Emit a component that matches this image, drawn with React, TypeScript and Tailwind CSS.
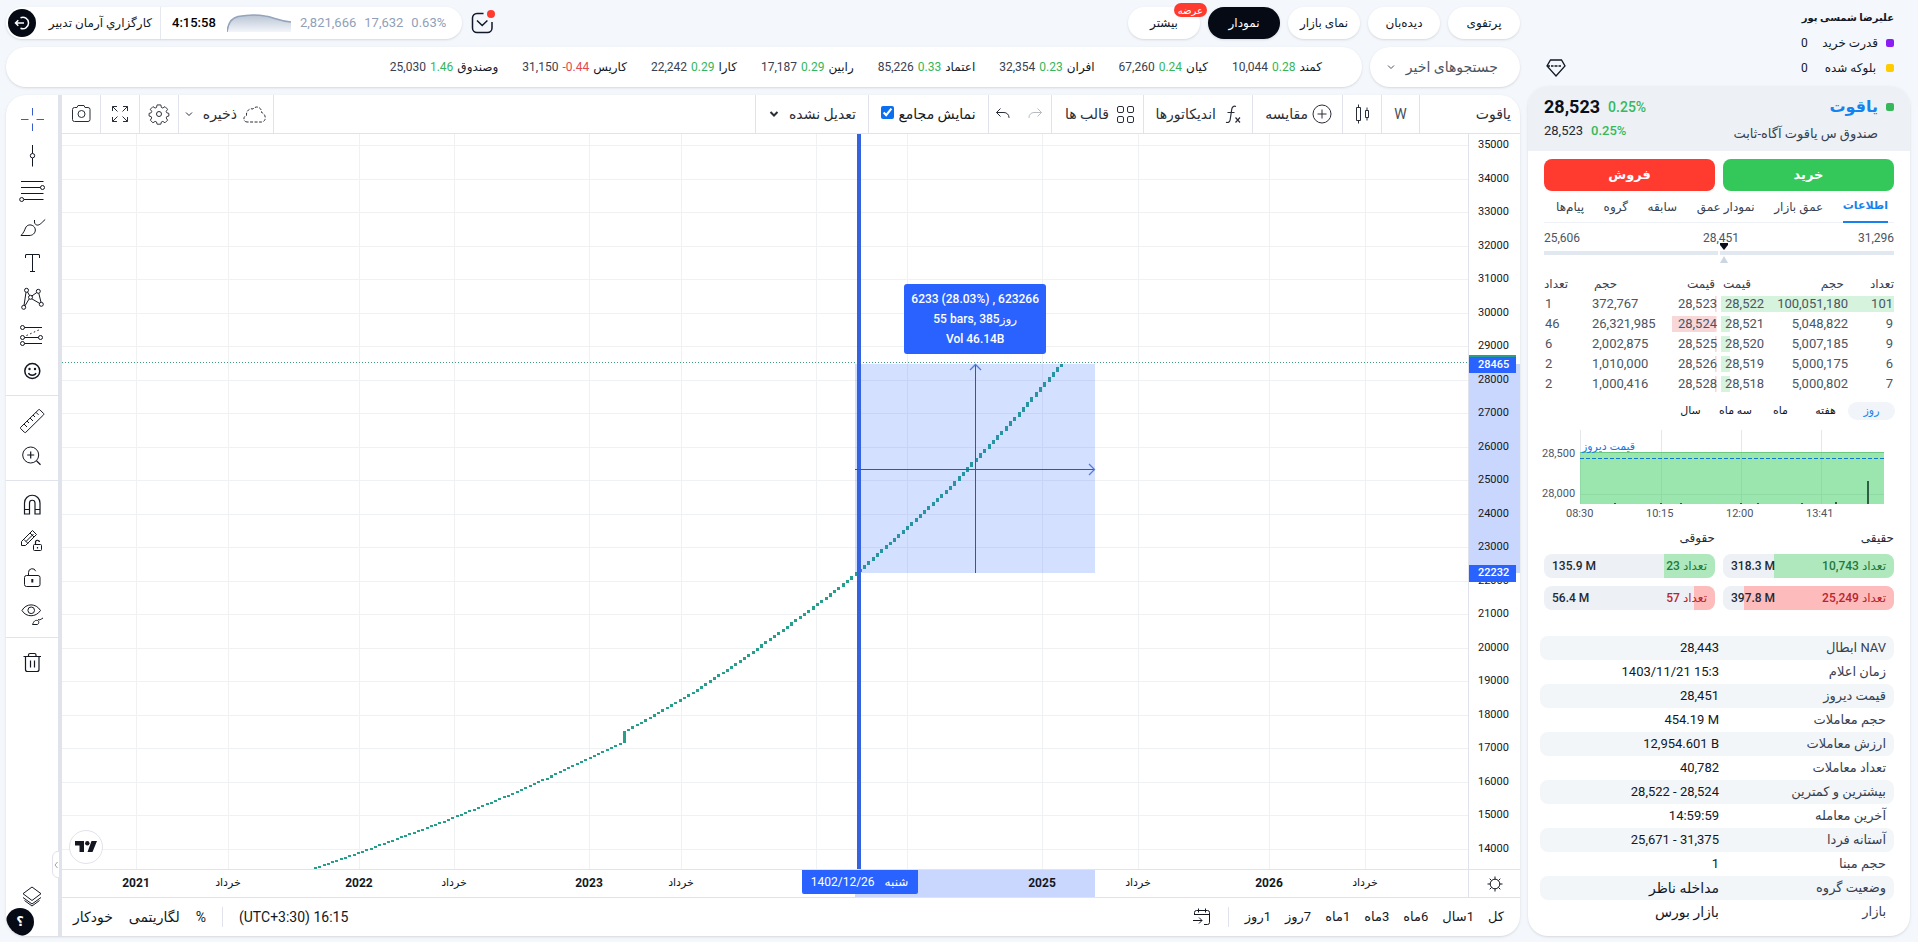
import type { ReactNode } from "react";

type IconProps = { children: ReactNode; size?: number; className?: string };

function Icon({ children, size = 28, className = "" }: IconProps) {
  return (
    <svg
      width={size}
      height={size}
      viewBox={`0 0 ${size} ${size}`}
      fill="none"
      stroke="currentColor"
      className={`shrink-0 ${className}`}
      aria-hidden="true"
    >
      {children}
    </svg>
  );
}

/* ---------- chart data ---------- */

const PLOT_W = 1406;
const PLOT_H = 735;

const CURVE: [number, number][] = [
  [253, 734],
  [310, 714],
  [388, 685],
  [445, 662],
  [488, 643],
  [527, 624],
  [561, 608],
  [562, 598],
  [588, 584],
  [632, 558],
  [680, 526],
  [728, 491],
  [777, 454],
  [794, 440],
  [845, 394],
  [885, 357],
  [911, 329],
  [959, 278],
  [1000, 230],
];

function curveY(x: number) {
  for (let i = 1; i < CURVE.length; i++) {
    const [x0, y0] = CURVE[i - 1];
    const [x1, y1] = CURVE[i];
    if (x <= x1) return y0 + ((y1 - y0) * (x - x0)) / (x1 - x0);
  }
  return CURVE[CURVE.length - 1][1];
}

const STEP = 4.29;
const BARS = Array.from({ length: 176 }, (_, i) => {
  const x = 253 + i * STEP;
  const top = Math.round(curveY(x + STEP / 2));
  const bottom = Math.round(curveY(x - STEP / 2));
  return { x: Math.round(x) - 1, y: top, h: Math.max(2, bottom - top) };
}).filter((b) => b.x <= 1000);

const PRICES = Array.from({ length: 22 }, (_, i) => 35000 - i * 1000);

const TIMES = [
  { x: 74, label: "2021", bold: true },
  { x: 166, label: "خرداد" },
  { x: 297, label: "2022", bold: true },
  { x: 392, label: "خرداد" },
  { x: 527, label: "2023", bold: true },
  { x: 619, label: "خرداد" },
  { x: 754, label: "" },
  { x: 845, label: "" },
  { x: 980, label: "2025", bold: true },
  { x: 1076, label: "خرداد" },
  { x: 1207, label: "2026", bold: true },
  { x: 1303, label: "خرداد" },
];

/* ---------- top bar ---------- */

function TopBar() {
  return (
    <header className="flex h-8 items-center justify-between">
      <div className="flex items-center gap-2">
        <div className="flex h-8 items-center rounded-full bg-white pr-4 shadow-sm">
          <button
            aria-label="خروج"
            className="ml-[2px] flex size-7 items-center justify-center rounded-full bg-[#050a14] text-white"
          >
            <Icon size={16}>
              <path d="M6.500 2.800A5.700 5.700 0 1 1 6.500 13.200M10 8H1.500M4.300 5.200 1.500 8l2.800 2.800" strokeWidth="1.500" />
            </Icon>
          </button>
          <span className="w-[124px] pr-2 text-right text-[12px] whitespace-nowrap text-[#111827]">
            كارگزاري آرمان تدبير
          </span>
          <span className="h-8 w-px bg-[#e5e9ef]" />
          <span className="w-[66px] pl-[11px] text-[13px] font-medium text-black">4:15:58</span>
          <svg width="65" height="18" viewBox="0 0 65 18" aria-hidden="true">
            <defs>
              <linearGradient id="spark" x1="0" y1="0" x2="0" y2="1">
                <stop offset="0" stopColor="#b9c4d4" />
                <stop offset="1" stopColor="#f3f6fa" />
              </linearGradient>
            </defs>
            <path d="M0 18C1 9 4 4 11 2.500C19 1 30 0.500 38 2C46 3 52 7 64 8V18Z" fill="url(#spark)" />
            <path d="M0 18C1 9 4 4 11 2.500C19 1 30 0.500 38 2C46 3 52 7 64 8" fill="none" stroke="#93a4bb" strokeWidth="1.500" />
          </svg>
          <div className="ml-2 flex gap-2 text-[13px] text-[#8fa0b8]">
            <span>2,821,666</span>
            <span>17,632</span>
            <span>0.63%</span>
          </div>
        </div>
        <button aria-label="پیام‌ها" className="relative text-[#111827]">
          <Icon size={24}>
            <path d="M13.500 2.500H7A4.500 4.500 0 0 0 2.500 7v10A4.500 4.500 0 0 0 7 21.500h10.500A4.500 4.500 0 0 0 22 17v-6" strokeWidth="1.500" />
            <path d="m7 9.500 5.200 5 5.200-5" strokeWidth="1.500" />
          </Icon>
          <span className="absolute -right-px -top-px size-2 rounded-full bg-[#ff3b30]" />
        </button>
      </div>
      <nav className="flex gap-2 text-[12px] text-[#111827]">
        <button className="relative h-8 w-[72px] rounded-full bg-white shadow-sm">
          بیشتر
          <span className="absolute -right-[7px] -top-1 flex h-[14px] items-center rounded-full bg-[#ff3b30] px-1 text-[10px] text-white">
            عرضه
          </span>
        </button>
        <button className="h-8 w-[72px] rounded-full bg-[#050a14] text-white shadow-sm">نمودار</button>
        <button className="h-8 w-[72px] rounded-full bg-white shadow-sm">نمای بازار</button>
        <button className="h-8 w-[72px] rounded-full bg-white shadow-sm">دیده‌بان</button>
        <button className="h-8 w-[72px] rounded-full bg-white shadow-sm">پرتفوی</button>
      </nav>
    </header>
  );
}

const TICKERS = [
  { name: "وصندوق", pct: "1.46", price: "25,030" },
  { name: "کاریس", pct: "-0.44", price: "31,150" },
  { name: "کارا", pct: "0.29", price: "22,242" },
  { name: "رابین", pct: "0.29", price: "17,187" },
  { name: "اعتماد", pct: "0.33", price: "85,226" },
  { name: "افران", pct: "0.23", price: "32,354" },
  { name: "کیان", pct: "0.24", price: "67,260" },
  { name: "کمند", pct: "0.28", price: "10,044" },
];

function TickerRow() {
  return (
    <div className="flex h-10 gap-2">
      <ul className="flex flex-1 items-center justify-end gap-6 rounded-[20px] bg-white pr-10 text-[12px] text-[#374151] shadow-sm">
        {TICKERS.map((t) => (
          <li key={t.name} className="flex items-center gap-1">
            <span>{t.price}</span>
            <span className={t.pct.startsWith("-") ? "text-[#e5484d]" : "text-[#34b65a]"}>{t.pct}</span>
            <span className="text-[#111827]">{t.name}</span>
          </li>
        ))}
      </ul>
      <button className="flex w-[150px] items-center justify-between rounded-[20px] bg-white pl-4 pr-[22px] text-[14px] text-[#4b5563] shadow-sm">
        <Icon size={10}>
          <path d="m2 3.500 3 3 3-3" />
        </Icon>
        جستجوهای اخیر
      </button>
    </div>
  );
}

/* ---------- chart toolbar ---------- */

function ChartToolbar() {
  return (
    <div className="flex h-[39px] shrink-0 items-stretch border-b border-[#e0e3eb] text-[14px] text-[#2a2e39]">
      <button aria-label="عکس" className="flex w-[38px] items-center justify-center">
        <Icon>
          <path d="M5.500 9.500a2 2 0 0 1 2-2H10l1-2h6l1 2h3a2 2 0 0 1 2 2v10a2 2 0 0 1-2 2h-13.500a2 2 0 0 1-2-2z" />
          <circle cx="14.500" cy="14" r="3.500" />
        </Icon>
      </button>
      <button aria-label="تمام صفحه" className="flex w-[39px] items-center justify-center border-l border-[#e0e3eb]">
        <Icon>
          <path d="M6.500 11V6.500H11M6.500 6.500l5 5M17 6.500h4.500V11M21.500 6.500l-5 5M6.500 17v4.500H11M6.500 21.500l5-5M17 21.500h4.500V17M21.500 21.500l-5-5" />
        </Icon>
      </button>
      <button aria-label="تنظیمات" className="flex w-[39px] items-center justify-center border-l border-[#e0e3eb]">
        <Icon>
          <circle cx="14" cy="14" r="2.500" />
          <path
            d="M12 4.500h4l.6 2.700 1.500.6 2.300-1.500 2.800 2.800-1.500 2.300.6 1.500 2.200.6v2.800l-2.200.6-.6 1.500 1.500 2.300-2.800 2.800-2.300-1.500-1.500.6-.6 2.400h-4l-.6-2.400-1.500-.6-2.300 1.500-2.800-2.800 1.500-2.300-.6-1.500-2.200-.6v-2.800l2.200-.6.6-1.500-1.500-2.300 2.800-2.800 2.300 1.500 1.500-.6z"
            transform="translate(.8 .7) scale(.94)"
          />
        </Icon>
      </button>
      <button className="flex w-[96px] items-center justify-between border-x border-[#e0e3eb] pl-1 pr-[6px]">
        <Icon size={12}>
          <path d="m3 4.500 3 3 3-3" />
        </Icon>
        <span className="ml-auto mr-1">ذخیره</span>
        <Icon size={26}>
          <path
            d="M6 21c-3.500 0-4.500-5.500-.5-6.500C5 9.500 9 7 12 8c3-4 9-1.500 8.500 3.500 2 .5 4.500 3 3.500 7-.5 1.500-2 2.500-3.500 2.500z"
            strokeDasharray="3 1.500"
          />
        </Icon>
      </button>
      <div className="flex-1" />
      <div className="flex w-[113px] items-center border-l border-[#e0e3eb] pl-3 pr-2">
        <Icon size={12}>
          <path d="m2.500 4 3.500 3.500L9.500 4" strokeWidth="2" />
        </Icon>
        <select
          aria-label="تعدیل قیمت"
          dir="rtl"
          className="min-w-0 flex-1 appearance-none bg-transparent pr-1 outline-none"
          defaultValue="raw"
        >
          <option value="raw">تعدیل نشده</option>
          <option value="adj">تعدیل شده</option>
        </select>
      </div>
      <label className="flex w-[120px] items-center justify-center gap-1 border-l border-[#e0e3eb] text-[#131722]">
        <input type="checkbox" defaultChecked className="mb-1 size-[13px] accent-[#0b6ff2]" />
        <span className="whitespace-nowrap">نمایش مجامع</span>
      </label>
      <div className="flex w-[63px] items-center border-l border-[#e0e3eb]">
        <button aria-label="واگرد">
          <Icon>
            <path d="M11.500 8.500 7.500 12.500l4 4M7.500 12.500h7.500a5 5 0 0 1 5 5v.5" />
          </Icon>
        </button>
        <button aria-label="ازنو" className="ml-1 text-[#b8bbc4]">
          <Icon>
            <path d="m16.500 8.500 4 4-4 4M20.500 12.500H13a5 5 0 0 0-5 5v.5" />
          </Icon>
        </button>
      </div>
      <button className="flex w-[92px] items-center justify-end border-l border-[#e0e3eb] pr-1">
        <span className="mr-[2px]">قالب ها</span>
        <Icon>
          <rect x="6.500" y="6.500" width="6" height="6" rx="1.500" />
          <rect x="16.500" y="6.500" width="6" height="6" rx="1.500" />
          <rect x="6.500" y="16.500" width="6" height="6" rx="1.500" />
          <rect x="16.500" y="16.500" width="6" height="6" rx="1.500" />
        </Icon>
      </button>
      <button className="flex w-[109px] items-center justify-end border-l border-[#e0e3eb] pr-[6px]">
        <span className="mr-[2px]">اندیکاتورها</span>
        <Icon>
          <path d="M18 6.500c-2.500-1-4 .5-4.300 3l-1.500 10c-.3 2-1.500 3.500-4.200 2.800M9.500 12.500h7M17.500 17.500l4.500 5M22 17.500l-4.500 5" strokeWidth="1.200" />
        </Icon>
      </button>
      <button className="flex w-[90px] items-center justify-end border-l border-[#e0e3eb] pr-[6px]">
        <span>مقایسه</span>
        <Icon>
          <circle cx="14" cy="14" r="9" />
          <path d="M14 9.500v9M9.500 14h9" />
        </Icon>
      </button>
      <button aria-label="نوع نمودار" className="flex w-[39px] items-center justify-center border-l border-[#e0e3eb]">
        <Icon>
          <path d="M8.500 7.500h4v13h-4zM10.500 4.500v3M10.500 20.500v3M17.500 10.500h3v7h-3zM19 7.500v3M19 17.500v3" />
        </Icon>
      </button>
      <button className="flex w-[38px] items-center justify-center border-l border-[#e0e3eb] text-[#4a4e59]">W</button>
      <button className="w-[101px] border-l border-[#e0e3eb] pr-[9px] text-right">یاقوت</button>
    </div>
  );
}

/* ---------- drawing tools ---------- */

const TOOL_GROUPS: { name: string; icon: ReactNode }[][] = [
  [
    {
      name: "نشانگر",
      icon: <path d="M3 14.500h7.500M18.500 14.500H26M14.500 3v7.500M14.500 18.500V26" stroke="#3a5bcc" />,
    },
    {
      name: "خط",
      icon: (
        <>
          <path d="M14.500 4v8.500M14.500 17v8.500" />
          <circle cx="14.500" cy="14.700" r="2.200" />
        </>
      ),
    },
    {
      name: "فیبوناچی",
      icon: (
        <>
          <path d="M3 4.500h22.500M3 10.500h19.500M3 16.500h22.500M6 22.500h19.500" strokeWidth="1.200" />
          <circle cx="24.500" cy="10.500" r="2" />
          <circle cx="3.700" cy="22.500" r="2" />
        </>
      ),
    },
    {
      name: "قلم",
      icon: (
        <>
          <path d="M3 22.500c2.500-2.500 3.500-5 4.500-7.500 1.300-3.200 5-4 7.800-2 2.700 2 2.600 6 .2 8-1.200 1-2.600 1.500-4.500 1.500z" />
          <path d="M16.500 7c-.3 3 .5 4.500 2.200 5 3 .7 5-2.500 8.500-5.500" />
        </>
      ),
    },
    {
      name: "متن",
      icon: (
        <path
          fill="currentColor"
          stroke="none"
          d="M8 6.500c0-.28.22-.5.500-.5H14v16h-2v1h5v-1h-2V6h5.500c.28 0 .5.22.5.5V9h1V6.500c0-.83-.67-1.500-1.500-1.500h-12C7.670 5 7 5.670 7 6.500V9h1V6.500Z"
        />
      ),
    },
    {
      name: "الگو",
      icon: (
        <>
          <path d="M8 7.300 6 20.500M9.500 7l2.200 3.800M7 20.800l4-6.700M13.800 11l5-3.500M13.800 13.800l8 4.700M20.800 8.300l2.200 9" />
          <circle cx="8.500" cy="5.300" r="2" />
          <circle cx="20.300" cy="6.300" r="2" />
          <circle cx="12.500" cy="12.300" r="2" />
          <circle cx="5.700" cy="22.300" r="2" />
          <circle cx="23.300" cy="19.300" r="2" />
        </>
      ),
    },
    {
      name: "پیش‌بینی",
      icon: (
        <>
          <path d="M6.500 6.500H24M6.500 16.500h14M6.500 22.500H24" />
          <path d="M8.500 14.500 23 8" strokeDasharray="1.500 2.500" />
          <circle cx="4.500" cy="6.500" r="2" />
          <circle cx="4.500" cy="16.500" r="2" />
          <circle cx="22.500" cy="16.500" r="2" />
          <circle cx="4.500" cy="22.500" r="2" />
        </>
      ),
    },
    {
      name: "شکلک",
      icon: (
        <>
          <circle cx="14.300" cy="14" r="7.500" strokeWidth="1.500" />
          <circle cx="11.500" cy="12" r="1.200" fill="currentColor" stroke="none" />
          <circle cx="17" cy="12" r="1.200" fill="currentColor" stroke="none" />
          <path d="M10.500 16c1 3 6.500 3 7.500 0" strokeWidth="1.300" />
        </>
      ),
    },
  ],
  [
    {
      name: "خط‌کش",
      icon: (
        <path d="M2.500 21.500 20.500 3.800c.5-.4 1-.4 1.400 0l3.700 3.700c.4.400.4.900 0 1.300L7.800 26.300c-.4.400-1 .4-1.400 0l-3.800-3.800c-.3-.3-.4-.7-.1-1zM6 18l3 3M9 15l2 2M12 12l3 3M15 9l2 2M18 6.300l2.500 2.500" />
      ),
    },
    {
      name: "بزرگ‌نمایی",
      icon: (
        <>
          <circle cx="12.700" cy="13" r="8" />
          <path d="M12.700 9.500v7M9.200 13h7M18.500 18.800l4 3.900" strokeWidth="1.200" />
        </>
      ),
    },
  ],
  [
    {
      name: "آهنربا",
      icon: (
        <path
          d="M6.500 23V12a7.750 7.750 0 0 1 15.500 0v11h-5V12a2.750 2.750 0 0 0-5.500 0v11zM6.500 18.500h5M17 18.500h5"
          strokeWidth="1.200"
        />
      ),
    },
    {
      name: "قفل قلم",
      icon: (
        <>
          <path d="m3.500 14.500 11-11 4 4-11 11H3.500zM6 12.500l4 4M12 6l4 4M5.500 12.500 13 5M8 14.500 15.500 7" />
          <rect x="15.500" y="17.500" width="8" height="6" rx="1" />
          <path d="M17.500 17.500v-2a2 2 0 0 1 4-.5M19.500 20v1.500" strokeWidth="1.200" />
        </>
      ),
    },
    {
      name: "قفل",
      icon: (
        <>
          <rect x="6.500" y="12.500" width="15.500" height="11" rx="2" />
          <path d="M10.500 12.500v-3a3.700 3.700 0 0 1 7.200-1.300" />
          <path d="M14.300 16v3.500" strokeWidth="2" />
        </>
      ),
    },
    {
      name: "نمایش",
      icon: (
        <>
          <path d="M4 11.500c4-7.500 14-7.500 18.500 0-4.500 7-14.500 7-18.500 0z" />
          <circle cx="13.200" cy="11.300" r="3.300" />
          <path d="M14.500 25.500c1.500-3.500 2.500-4.500 5-4 2 .6 1.500 4-.5 4zM20 20.500c1.500 1 2.500 0 5-1.500" />
        </>
      ),
    },
  ],
  [
    {
      name: "حذف",
      icon: (
        <path
          d="M5.500 8.500h17.500M10.500 8.500V7c0-1 .5-1.500 1.500-1.500h4.500c1 0 1.500.5 1.500 1.500v1.500M7.500 8.500v13c0 1.300.7 2 2 2h9.500c1.300 0 2-.7 2-2v-13M12.500 12.500v7M16.500 12.500v7"
          strokeWidth="1.200"
        />
      ),
    },
  ],
];

function DrawingTools() {
  return (
    <div className="relative flex w-14 shrink-0 flex-col border-r-4 border-[#e0e3eb] pb-[21px] pt-[6px] text-[#131722]">
      {TOOL_GROUPS.map((group, i) => (
        <div key={i} className={i > 0 ? "mt-[6px] border-t border-[#e0e3eb] pt-[6px]" : ""}>
          {group.map((tool) => (
            <button key={tool.name} aria-label={tool.name} className="flex h-9 w-full items-center justify-center">
              <Icon>{tool.icon}</Icon>
            </button>
          ))}
        </div>
      ))}
      <button aria-label="لایه‌ها" className="mt-auto flex h-9 w-full items-center justify-center">
        <Icon>
          <path d="m14 4 9 6.700-9 6.800-9-6.800zM5 14.500l9 6.500 9-6.500M6.500 17.500 14 23l7.500-5.500" />
        </Icon>
      </button>
      <button
        aria-label="جمع کردن"
        className="absolute -right-[2px] bottom-[58px] flex h-[27px] w-2 items-center justify-center rounded-l-md border border-[#e0e3eb] bg-white text-[#9aa0ad]"
      >
        <Icon size={6}>
          <path d="M4.500 0 2 3l2.500 3" />
        </Icon>
      </button>
      <button
        aria-label="راهنما"
        className="absolute bottom-0 left-0 flex size-7 items-center justify-center rounded-full bg-[#050a14] text-[13px] font-bold text-white"
      >
        ؟
      </button>
    </div>
  );
}

/* ---------- plot ---------- */

function Plot() {
  return (
    <div className="relative min-w-0 flex-1">
      <svg
        className="absolute inset-0 size-full"
        viewBox={`0 0 ${PLOT_W} ${PLOT_H}`}
        preserveAspectRatio="none"
        shapeRendering="crispEdges"
        aria-hidden="true"
      >
        {PRICES.map((p, i) => (
          <line key={p} x1="0" x2={PLOT_W} y1={11.5 + i * 33.52} y2={11.5 + i * 33.52} stroke="#f0f1f3" />
        ))}
        {TIMES.map((t) => (
          <line key={t.x} x1={t.x + 0.5} x2={t.x + 0.5} y1="0" y2={PLOT_H} stroke="#f0f1f3" />
        ))}
        {BARS.map((b) => (
          <rect key={b.x} x={b.x} y={b.y} width="3" height={b.h} fill="#26a08d" />
        ))}
        <line x1="0" x2={PLOT_W} y1="228.500" y2="228.500" stroke="#3d9a80" strokeDasharray="1 2" />
        <rect x="793" y="230" width="240" height="209" fill="#2962ff" fillOpacity="0.200" />
        <rect x="795" y="0" width="4" height={PLOT_H} fill="#3563e0" />
        <g stroke="#2f55b8" fill="none">
          <path d="M793 335.500h239M913.500 439V231" />
          <path d="m908 236 5.500-5.500L919 236M1027 330l5.500 5.500L1027 341" stroke="#5479e0" shapeRendering="auto" strokeWidth="1.300" />
        </g>
      </svg>
      <div className="absolute left-[59.900%] top-[20.400%] flex h-[70px] w-[142px] flex-col items-center justify-center rounded-[3px] bg-[#2962ff] text-[12px] leading-5 font-medium text-white">
        <span>6233 (28.03%) , 623266</span>
        <span>55 bars, 385روز</span>
        <span>Vol 46.14B</span>
      </div>
      <div className="absolute bottom-[5px] left-[7px] flex size-[34px] items-center justify-center rounded-full border border-[#e0e3eb] bg-white">
        <svg width="22" height="12" viewBox="0 0 22 12" fill="#131722" aria-hidden="true">
          <path d="M0 0h9v11H4.500V4.500H0zM16.500 0H22l-4.500 11h-5z" />
          <circle cx="12.300" cy="2.300" r="2.200" />
        </svg>
      </div>
    </div>
  );
}

function PriceAxis() {
  return (
    <div className="relative flex w-[52px] shrink-0 flex-col justify-between border-l border-[#e0e3eb] pb-3 pt-[3px] text-[11px] leading-4 text-[#131722]">
      <div className="absolute inset-x-0 top-[31.300%] h-[28.400%] bg-[#c9d7ff]" />
      {PRICES.map((p) => (
        <span key={p} className="relative pl-[9px]">
          {p}
        </span>
      ))}
      <span className="absolute left-0 top-[30.100%] flex h-[18px] w-[47px] items-center border-t-2 border-[#26a08d] bg-[#2962ff] pl-[9px] font-medium text-white">
        28465
      </span>
      <span className="absolute left-0 top-[58.600%] flex h-[17px] w-[47px] items-center bg-[#2962ff] pl-[9px] font-medium text-white">
        22232
      </span>
    </div>
  );
}

function TimeAxis() {
  return (
    <div className="flex h-7 shrink-0 border-t border-[#e0e3eb] text-[12px] text-[#131722]">
      <div className="relative flex-1">
        <div className="absolute inset-y-0 left-[56.400%] w-[17.100%] bg-[#c9d7ff]" />
        {TIMES.filter((t) => t.label).map((t) => (
          <span
            key={t.x}
            className={`absolute top-1 -translate-x-1/2 leading-[18px] ${t.bold ? "font-bold" : "text-[11px]"}`}
            style={{ left: `${(t.x / PLOT_W) * 100}%` }}
          >
            {t.label}
          </span>
        ))}
        <span className="absolute left-[52.600%] top-0 flex h-6 w-[116px] items-center justify-center gap-[10px] rounded-b-[2px] bg-[#2962ff] text-[12px] text-white">
          <span>1402/12/26</span>
          <span>شنبه</span>
        </span>
      </div>
      <button
        aria-label="تنظیمات محور"
        className="flex w-[52px] items-center justify-center border-l border-[#e0e3eb]"
      >
        <Icon size={20}>
          <circle cx="10" cy="10" r="4.800" />
          <path d="M10 2.500v2.700M10 14.800v2.700M2.500 10h2.700M14.800 10h2.700M4.700 4.700l1.900 1.900M13.400 13.400l1.900 1.900M4.700 15.300l1.900-1.900M13.400 6.600l1.900-1.900" />
        </Icon>
      </button>
    </div>
  );
}

const RANGES = ["کل", "1سال", "6ماه", "3ماه", "1ماه", "7روز", "1روز"];

function BottomBar() {
  return (
    <div className="flex h-[39px] shrink-0 items-center border-t border-[#e0e3eb] text-[14px] text-[#131722]">
      <button className="pl-[11px]">خودکار</button>
      <button className="pl-4">لگاریتمی</button>
      <button className="pl-4">%</button>
      <span className="ml-4 h-5 w-px bg-[#e0e3eb]" />
      <button className="pl-4">(UTC+3:30) 16:15</button>
      <div className="ml-auto flex items-center">
        <button aria-label="برو به تاریخ" className="mr-4">
          <Icon size={20}>
            <path d="M2.500 8V5.500a2 2 0 0 1 2-2h11a2 2 0 0 1 2 2v10a2 2 0 0 1-2 2H12M2.500 7.500h15M6.500 1.500v4M13.500 1.500v4M1 13.500h9M7 10.500l3 3-3 3" />
          </Icon>
        </button>
        <span className="h-5 w-px bg-[#e0e3eb]" />
        <div dir="rtl" className="flex gap-[14px] pl-4 pr-4 text-[13px]">
          {RANGES.map((r) => (
            <button key={r}>{r}</button>
          ))}
        </div>
      </div>
    </div>
  );
}

/* ---------- symbol panel ---------- */

const ASKS = [
  ["1", "372,767", "28,523", 1],
  ["46", "26,321,985", "28,524", 26],
  ["6", "2,002,875", "28,525", 1],
  ["2", "1,010,000", "28,526", 1],
  ["2", "1,000,416", "28,528", 1],
] as const;

const BIDS = [
  ["28,522", "100,051,180", "101", 100],
  ["28,521", "5,048,822", "9", 5],
  ["28,520", "5,007,185", "9", 5],
  ["28,519", "5,000,175", "6", 5],
  ["28,518", "5,000,802", "7", 5],
] as const;

function MarketDepth() {
  return (
    <div className="mt-[9px] flex gap-1 px-4 text-[13px] text-[#4b5563]">
      <table className="w-[173px] border-separate border-spacing-x-0 border-spacing-y-1 leading-4">
        <thead>
          <tr className="text-[12px] text-[#374151]">
            <th className="w-12 p-0 text-left font-normal">تعداد</th>
            <th className="p-0 pl-[2px] text-left font-normal">حجم</th>
            <th className="p-0 pr-[2px] text-right font-normal">قیمت</th>
          </tr>
        </thead>
        <tbody>
          {ASKS.map(([count, volume, price, share]) => (
            <tr
              key={price}
              style={{ backgroundImage: `linear-gradient(to left, #f8d7d9 ${share}%, transparent ${share}%)` }}
            >
              <td className="p-0 pl-[1px]">{count}</td>
              <td className="p-0">{volume}</td>
              <td className="p-0 text-right">{price}</td>
            </tr>
          ))}
        </tbody>
      </table>
      <table className="w-[173px] border-separate border-spacing-x-0 border-spacing-y-1 leading-4">
        <thead>
          <tr className="text-[12px] text-[#374151]">
            <th className="p-0 pl-[2px] text-left font-normal">قیمت</th>
            <th className="p-0 pr-1 text-right font-normal">حجم</th>
            <th className="w-[46px] p-0 text-right font-normal">تعداد</th>
          </tr>
        </thead>
        <tbody>
          {BIDS.map(([price, volume, count, share]) => (
            <tr
              key={price}
              style={{ backgroundImage: `linear-gradient(to right, #d5f3dd ${share}%, transparent ${share}%)` }}
            >
              <td className="p-0 pl-1">{price}</td>
              <td className="p-0 text-right">{volume}</td>
              <td className="p-0 pr-[1px] text-right">{count}</td>
            </tr>
          ))}
        </tbody>
      </table>
    </div>
  );
}

function IntradayChart() {
  return (
    <div className="mt-[10px] flex pl-[14px] pr-[26px] text-[11px] leading-4 text-[#4b5563]">
      <div className="flex w-[38px] shrink-0 flex-col pr-[5px] text-right">
        <span className="mt-4">28,500</span>
        <span className="mt-6">28,000</span>
      </div>
      <div className="min-w-0 flex-1">
        <div className="relative h-[74px]">
          <svg className="size-full" viewBox="0 0 304 74" preserveAspectRatio="none" aria-hidden="true">
            <path d="M.5 0v74M81.500 0v74M161.500 0v74M241.500 0v74M0 64.500h304" stroke="#e5e7eb" fill="none" />
            <rect x="0" y="22" width="304" height="52" fill="#4cd070" fillOpacity="0.560" />
            <path d="M0 22.500h304" stroke="#6cc982" />
            <path d="M0 28.500h304" stroke="#0f7ac8" strokeDasharray="4 2" />
            <path d="M288 51v23" stroke="#2f5e43" strokeWidth="2" />
            <path d="M256 72v2M81 73v1M101 73v1M222 73v1M35 73v1M161 73v1M178 73v1" stroke="#2f5e43" strokeWidth="2" />
          </svg>
          <span className="absolute left-[2px] top-[9px] leading-4 text-[#0f7ae5]">قیمت دیروز</span>
        </div>
        <div className="flex pt-[2px]">
          {["08:30", "10:15", "12:00", "13:41"].map((t) => (
            <span key={t} className="w-20 shrink-0 -translate-x-[14px]">
              {t}
            </span>
          ))}
        </div>
      </div>
    </div>
  );
}

type ShareBarProps = { amount: string; count: string; share: number; tone: "buy" | "sell" };

function ShareBar({ amount, count, share, tone }: ShareBarProps) {
  return (
    <div className="relative flex h-6 flex-1 items-center justify-between overflow-hidden rounded-lg bg-[#edf1f5] px-2 text-[12px] font-medium">
      <span
        className={`absolute inset-y-0 right-0 ${tone === "buy" ? "bg-[#aee8bc]" : "bg-[#fdbbbb]"}`}
        style={{ width: `${share}%` }}
      />
      <span className="relative text-[#1f2937]">{amount}</span>
      <span dir="rtl" className={`relative ${tone === "buy" ? "text-[#24793c]" : "text-[#b8252b]"}`}>
        تعداد {count}
      </span>
    </div>
  );
}

const STATS = [
  ["NAV ابطال", "28,443"],
  ["زمان اعلام", "1403/11/21 15:3"],
  ["قیمت دیروز", "28,451"],
  ["حجم معاملات", "454.19 M"],
  ["ارزش معاملات", "12,954.601 B"],
  ["تعداد معاملات", "40,782"],
  ["بیشترین و کمترین", "28,522 - 28,524"],
  ["آخرین معامله", "14:59:59"],
  ["آستانه فردا", "25,671 - 31,375"],
  ["حجم مبنا", "1"],
  ["وضعیت گروه", "مداخله ناظر"],
  ["بازار", "بازار بورس"],
];

function StatsTable() {
  return (
    <table className="mx-3 mt-[26px] w-[354px] border-separate border-spacing-0 text-[13px] leading-5">
      <tbody>
        {STATS.map(([label, value]) => (
          <tr key={label} className="h-6 odd:bg-[#f3f6f9]">
            <td className="rounded-l-lg p-0 text-right text-[#111827]">
              {/[0-9]/.test(value) ? value : <span className="text-[14px]">{value}</span>}
            </td>
            <th scope="row" dir="rtl" className="w-[175px] rounded-r-lg p-0 pr-2 text-right font-normal text-[#374151]">
              {label}
            </th>
          </tr>
        ))}
      </tbody>
    </table>
  );
}

function SymbolPanel() {
  return (
    <aside className="flex w-[382px] shrink-0 flex-col">
      <section className="flex h-[86px] items-end justify-between pb-2 pl-[18px] pr-4 text-[12px] text-[#111827]">
        <button aria-label="اشتراک">
          <Icon size={20}>
            <path d="M4.500 2h11L19 8l-9 10L1 8zM5 8h2.500M8.500 8h3M12.500 8H15M1 8h3" strokeWidth="1.300" />
          </Icon>
        </button>
        <div dir="rtl" className="flex w-[93px] flex-col gap-[5px] leading-5">
          <span className="text-[10px] font-bold whitespace-nowrap">علیرضا شمسی پور</span>
          <div className="flex items-center">
            <span className="size-2 rounded-[2px] bg-[#8b1cf5]" />
            <span className="mr-2">قدرت خرید</span>
            <span className="mr-auto">0</span>
          </div>
          <div className="flex items-center">
            <span className="size-2 rounded-[2px] bg-[#ffcc00]" />
            <span className="mr-[10px]">بلوکه شده</span>
            <span className="mr-auto">0</span>
          </div>
        </div>
      </section>

      <section className="flex flex-1 flex-col overflow-hidden rounded-[20px] bg-white shadow-sm">
        <div className="flex h-[65px] justify-between bg-[#edf1f5] pl-4 pr-4 pt-2 text-[13px]">
          <div>
            <div className="flex items-center gap-2 leading-[26px]">
              <span className="text-[18px] font-bold text-[#0b0f19]">28,523</span>
              <span className="text-[14px] font-medium text-[#35b95b]">0.25%</span>
            </div>
            <div className="flex items-center gap-2 leading-[22px]">
              <span className="text-[#1f2937]">28,523</span>
              <span className="font-medium text-[#35b95b]">0.25%</span>
            </div>
          </div>
          <div dir="rtl">
            <div className="flex items-center gap-2 leading-[26px]">
              <span className="size-2 rounded-[2px] bg-[#34b85a]" />
              <h1 className="text-[16px] font-bold text-[#1682ee]">یاقوت</h1>
            </div>
            <p className="pr-4 text-[13px] leading-[28px] text-[#374151]">صندوق س یاقوت آگاه-ثابت</p>
          </div>
        </div>

        <div className="flex gap-2 px-4 pt-2 text-[13px] font-bold text-white">
          <button className="h-8 flex-1 rounded-lg bg-[#ff3b30]">فروش</button>
          <button className="h-8 flex-1 rounded-lg bg-[#34c759]">خرید</button>
        </div>

        <nav dir="rtl" className="mx-4 flex h-8 justify-between border-b border-[#eef1f5] pl-3 pr-[6px] text-[12px] text-[#374151]">
          <button className="-mb-px border-b-2 border-[#1682ee] text-[11px] font-bold text-[#1682ee]">اطلاعات</button>
          <button>عمق بازار</button>
          <button>نمودار عمق</button>
          <button>سابقه</button>
          <button>گروه</button>
          <button>پیام‌ها</button>
        </nav>

        <div className="relative mx-4 h-10 pt-[7px] text-[12px] leading-4 text-[#4b5563]">
          <div className="flex justify-between">
            <span>25,606</span>
            <span className="pl-1">28,451</span>
            <span>31,296</span>
          </div>
          <div className="mt-[5px] flex h-1 gap-[2px]">
            <span className="flex-1 bg-[#e2e8f0]" />
            <span className="flex-1 bg-[#e2e8f0]" />
          </div>
          <svg width="8" height="20" viewBox="0 0 8 20" className="absolute left-[176px] top-5" aria-hidden="true">
            <path d="M0 0h8v2L4 7 0 2z" fill="#0b0f19" />
            <path d="M0 20h8L4 13z" fill="#ccd5e0" />
          </svg>
        </div>

        <MarketDepth />

        <div dir="rtl" className="mt-[6px] flex pr-[15px] text-[11px] text-[#111827]">
          <button className="h-[18px] w-[47px] rounded-full bg-[#f1f4f8] text-[#1682ee]">روز</button>
          <button className="w-[45px]">هفته</button>
          <button className="w-[45px]">ماه</button>
          <button className="w-[45px]">سه ماه</button>
          <button className="w-[45px]">سال</button>
        </div>

        <IntradayChart />

        <div className="mt-2 flex flex-col gap-2 px-4">
          <div className="flex gap-2 text-right text-[12px] leading-4 text-[#1f2937]">
            <span className="flex-1">حقوقی</span>
            <span className="flex-1">حقیقی</span>
          </div>
          <div className="flex gap-2">
            <ShareBar amount="135.9 M" count="23" share={30} tone="buy" />
            <ShareBar amount="318.3 M" count="10,743" share={70} tone="buy" />
          </div>
          <div className="flex gap-2">
            <ShareBar amount="56.4 M" count="57" share={12} tone="sell" />
            <ShareBar amount="397.8 M" count="25,249" share={88} tone="sell" />
          </div>
        </div>

        <StatsTable />
      </section>
    </aside>
  );
}

export default function App() {
  return (
    <div className="flex min-h-screen gap-2 bg-[#f4f7fb] pb-[6px] pl-[6px] pr-2 font-[Roboto,'DejaVu_Sans',sans-serif]">
      <main className="flex min-w-0 flex-1 flex-col gap-2 pt-[7px]">
        <TopBar />
        <TickerRow />
        <section className="flex flex-1 overflow-hidden rounded-[20px] bg-white shadow-sm">
          <DrawingTools />
          <div className="flex min-w-0 flex-1 flex-col">
            <ChartToolbar />
            <div className="flex flex-1">
              <Plot />
              <PriceAxis />
            </div>
            <TimeAxis />
            <BottomBar />
          </div>
        </section>
      </main>
      <SymbolPanel />
    </div>
  );
}
